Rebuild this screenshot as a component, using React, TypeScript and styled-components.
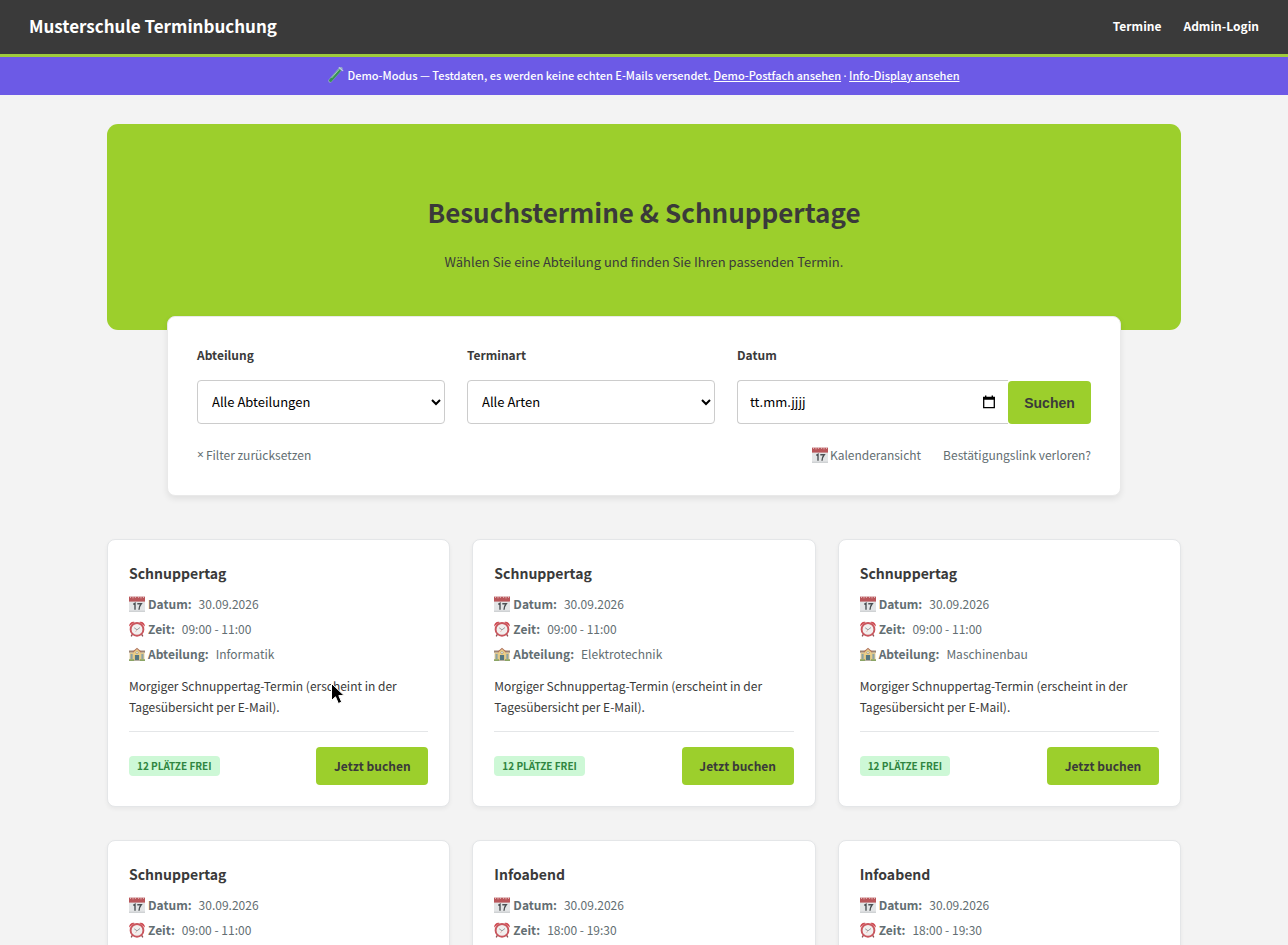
import React from "react";
import styled, { createGlobalStyle } from "styled-components";

const GlobalStyle = createGlobalStyle`
  *, *::before, *::after { box-sizing: border-box; }
  body {
    margin: 0;
    background: #f3f3f3;
    color: #3a3a3a;
    font-family: "Noto Sans CJK SC", "Noto Sans", sans-serif;
    font-size: 13px;
    line-height: 20px;
  }
`;

const Page = styled.div`
  position: relative;
`;

const Header = styled.header`
  display: flex;
  align-items: center;
  justify-content: space-between;
  height: 57px;
  padding: 0 29px 2px;
  background: #3a3a3a;
  border-bottom: 3px solid #9fcb3b;
`;

const Brand = styled.a`
  color: #fff;
  font-size: 17px;
  font-weight: 700;
  line-height: 28px;
  text-decoration: none;
`;

const Nav = styled.nav`
  display: flex;
  gap: 22px;
`;

const NavLink = styled.a`
  color: #fff;
  font-size: 12px;
  font-weight: 700;
  text-decoration: none;
`;

const Banner = styled.div`
  display: flex;
  align-items: center;
  justify-content: center;
  gap: 3px;
  height: 38px;
  padding-bottom: 2px;
  background: #6c5ae6;
  color: #fff;
  font-size: 11px;
  font-weight: 500;

  a { color: inherit; }
`;

const Symbol = styled.span`
  font-family: "Noto Sans", sans-serif;
`;

const Main = styled.main`
  max-width: 1074px;
  margin: 0 auto;
  padding: 29px 0;
`;

const Hero = styled.section`
  padding: 67px 22px 57px;
  background: #9ccf2c;
  border-radius: 11px;
  text-align: center;
`;

const HeroTitle = styled.h1`
  margin: 0 0 18px;
  font-size: 26px;
  font-weight: 700;
  line-height: 42px;
`;

const HeroText = styled.p`
  margin: 0;
  font-size: 13px;
  line-height: 22px;
`;

const FilterPanel = styled.form`
  position: relative;
  max-width: 954px;
  margin: -14px auto 43px;
  padding: 28px 29px 30px;
  background: #fff;
  border: 1px solid #e9e9e9;
  border-radius: 8px;
  box-shadow: 0 3px 6px rgba(0, 0, 0, 0.08);
`;

const FilterRow = styled.div`
  display: grid;
  grid-template-columns: 248fr 248fr 354fr;
  gap: 22px;
`;

const Field = styled.div`
  display: flex;
  flex-direction: column;
  gap: 15px;
`;

const Label = styled.label`
  font-size: 12px;
  font-weight: 700;
`;

const Select = styled.select`
  width: 100%;
  height: 44px;
  padding: 0 0 2px 10px;
  background: #fff;
  border: 1px solid #ccc;
  border-radius: 4px;
  color: #000;
  font: 400 13px "Noto Sans CJK SC", "Noto Sans", sans-serif;
`;

const DateRow = styled.div`
  display: flex;
  align-items: flex-end;
`;

const DateBox = styled.div`
  display: flex;
  flex: 1;
  align-items: center;
  height: 44px;
  padding: 0 12px 1px;
  background: #fff;
  border: 1px solid #ccc;
  border-right: 0;
  border-radius: 4px 0 0 4px;
`;

const DateInput = styled.input`
  flex: 1;
  min-width: 0;
  padding: 0;
  background: none;
  border: 0;
  color: #000;
  font: 400 13px "Noto Sans CJK SC", "Noto Sans", sans-serif;

  &::placeholder { color: #000; opacity: 1; }
`;

const PickerButton = styled.button`
  display: flex;
  padding: 0;
  background: none;
  border: 0;
`;

const SearchButton = styled.button`
  width: 83px;
  height: 43px;
  padding: 0;
  background: #9ccf2c;
  border: 0;
  border-radius: 4px;
  color: #3a3a3a;
  font: 700 14px "Liberation Sans", Arial, sans-serif;
`;

const FilterLinks = styled.div`
  display: flex;
  gap: 22px;
  margin-top: 21px;
`;

const QuietLink = styled.a<{ $push?: boolean }>`
  display: flex;
  align-items: center;
  gap: 2px;
  margin-left: ${(p) => (p.$push ? "auto" : "0")};
  color: #636e72;
  font-size: 12px;
  text-decoration: none;
`;

const CardGrid = styled.div`
  display: grid;
  grid-template-columns: repeat(3, 1fr);
  gap: 33px 22px;
`;

const Card = styled.article`
  padding: 21px;
  background: #fff;
  border: 1px solid #e4e6e8;
  border-radius: 8px;
  box-shadow: 0 2px 4px rgba(0, 0, 0, 0.05);
`;

const CardTitle = styled.h2`
  margin: 0 0 9px;
  font-size: 14px;
  font-weight: 700;
  line-height: 24px;
`;

const Meta = styled.p`
  display: flex;
  align-items: center;
  gap: 3px;
  margin: 0 0 5px;
  color: #636e72;
  font-size: 12px;
`;

const MetaLabel = styled.strong`
  margin-right: 4px;
  font-weight: 700;
`;

const Description = styled.p`
  margin: 11px 0 14px;
  font-size: 12px;
  line-height: 21px;
`;

const CardFooter = styled.div`
  display: flex;
  align-items: center;
  justify-content: space-between;
  padding-top: 15px;
  border-top: 1px solid #e4e6e8;
`;

const Badge = styled.span`
  padding: 0 8px;
  background: #cdf8d6;
  border-radius: 4px;
  color: #2f8540;
  font-size: 10px;
  font-weight: 700;
  text-transform: uppercase;
`;

const BookButton = styled.button`
  width: 112px;
  height: 38px;
  padding: 0 0 2px;
  background: #9ccf2c;
  border: 0;
  border-radius: 4px;
  color: #3a3a3a;
  font: 700 12px "Noto Sans CJK SC", "Noto Sans", sans-serif;
`;

const Pointer = styled.svg`
  position: absolute;
  top: 682px;
  left: 330px;
  pointer-events: none;
`;

const CalendarEmoji = () => (
  <svg width="16" height="16" viewBox="0 0 16 16" aria-hidden="true">
    <path d="M0 4h16v12H0z" fill="#e3e5e6" />
    <path d="M0 14.6h16V16H0z" fill="#cfd2d4" />
    <path d="M0 .6h16v5H0z" fill="#b9565a" />
    <path d="M1.5 0v2M4 0v2.4M6.4 0v2M9.6 0v2M12 0v2.4M14.5 0v2" stroke="#e8c9ca" strokeWidth=".8" />
    <path d="M4.3 8.300l1.700-1v6.400M8.300 7.700h3.900c-1.500 1.800-2.100 3.600-2.200 6" fill="none" stroke="#4c5154" strokeWidth="1.400" />
  </svg>
);

const ClockEmoji = () => (
  <svg width="16" height="16" viewBox="0 0 16 16" aria-hidden="true">
    <path d="M3.500 13l-1.300 2.400M12.500 13l1.300 2.400" stroke="#8e5052" strokeWidth="1.400" />
    <path d="M.2 5.600C-.2 2.200 2.500.2 5.600.9zM15.800 5.600C16.200 2.200 13.500.2 10.400.9z" fill="#cf4a52" />
    <circle cx="8" cy="8.400" r="6.400" fill="#f1efee" stroke="#c9565d" strokeWidth="1.900" />
    <path d="M5.200 6.800L8 8.800l3-2.300" fill="none" stroke="#7d888b" strokeWidth=".8" />
    <path d="M8 8.800l-1.600 2.200" stroke="#df9b92" strokeWidth=".6" />
  </svg>
);

const SchoolEmoji = () => (
  <svg width="16" height="16" viewBox="0 0 16 16" aria-hidden="true">
    <path d="M0 4.500h16v2.200H0z" fill="#9a8374" />
    <path d="M.6 6.600h14.800V14H.6z" fill="#e0c78c" />
    <path d="M1.600 8h2v5h-2zM12.400 8h2v5h-2z" fill="#8ba3a4" />
    <path d="M4.500 5.800L8 2.800l3.500 3V14h-7z" fill="#eccf86" />
    <path d="M3.800 6.200L8 2.400l4.200 3.800" fill="none" stroke="#b0735c" strokeWidth="1.100" />
    <circle cx="8" cy="6.700" r="1.100" fill="#fff" stroke="#6d6a5f" strokeWidth=".5" />
    <path d="M5.900 9h4.200v5H5.900z" fill="#557680" />
    <path d="M0 13.200h5V15H0zM11 13.200h5V15h-5z" fill="#8ba565" />
    <path d="M5 14h6v1H5z" fill="#b6afa3" />
  </svg>
);

const TubeEmoji = () => (
  <svg width="16" height="16" viewBox="0 0 16 16" aria-hidden="true">
    <path d="M12.800 1.600L2.200 13.800" stroke="#8fa3c8" strokeWidth="3.800" strokeLinecap="round" />
    <path d="M11.400 3.600L2.500 13.500" stroke="#379055" strokeWidth="2.900" strokeLinecap="round" />
    <path d="M11.300 2.300L3.500 11" stroke="#b4dcc0" strokeWidth=".8" />
    <path d="M11.200.6l3.600 3" stroke="#c3cfe3" strokeWidth="1.100" strokeLinecap="round" />
  </svg>
);

const PickerIcon = () => (
  <svg width="14" height="14" viewBox="0 0 14 14" aria-hidden="true">
    <path d="M1.700 2.500h10.600v10.200H1.700z" fill="none" stroke="#000" strokeWidth="1.300" />
    <path d="M1.100 1.900h11.800v2.900H1.100zM3 .5h1.400v2H3zM9.600.5H11v2H9.600z" />
  </svg>
);

type Event = { title: string; time: string; department: string };

const events: Event[] = [
  { title: "Schnuppertag", time: "09:00 - 11:00", department: "Informatik" },
  { title: "Schnuppertag", time: "09:00 - 11:00", department: "Elektrotechnik" },
  { title: "Schnuppertag", time: "09:00 - 11:00", department: "Maschinenbau" },
  { title: "Schnuppertag", time: "09:00 - 11:00", department: "Informatik" },
  { title: "Infoabend", time: "18:00 - 19:30", department: "Elektrotechnik" },
  { title: "Infoabend", time: "18:00 - 19:30", department: "Maschinenbau" },
];

const EventCard = ({ title, time, department }: Event) => (
  <Card>
    <CardTitle>{title}</CardTitle>
    <Meta><CalendarEmoji /><MetaLabel>Datum:</MetaLabel>30.09.2026</Meta>
    <Meta><ClockEmoji /><MetaLabel>Zeit:</MetaLabel>{time}</Meta>
    <Meta><SchoolEmoji /><MetaLabel>Abteilung:</MetaLabel>{department}</Meta>
    <Description>Morgiger Schnuppertag-Termin (erscheint in der Tagesübersicht per E-Mail).</Description>
    <CardFooter>
      <Badge>12 Plätze frei</Badge>
      <BookButton type="button">Jetzt buchen</BookButton>
    </CardFooter>
  </Card>
);

export default function App() {
  return (
    <Page>
      <GlobalStyle />
      <Header>
        <Brand href="#">Musterschule Terminbuchung</Brand>
        <Nav>
          <NavLink href="#termine">Termine</NavLink>
          <NavLink href="#login">Admin-Login</NavLink>
        </Nav>
      </Header>
      <Banner>
        <TubeEmoji />
        <span>
          Demo-Modus — Testdaten, es werden keine echten E-Mails versendet.{" "}
          <a href="#postfach">Demo-Postfach ansehen</a> <Symbol>·</Symbol>{" "}
          <a href="#display">Info-Display ansehen</a>
        </span>
      </Banner>
      <Main>
        <Hero>
          <HeroTitle>Besuchstermine &amp; Schnuppertage</HeroTitle>
          <HeroText>Wählen Sie eine Abteilung und finden Sie Ihren passenden Termin.</HeroText>
        </Hero>
        <FilterPanel onSubmit={(e) => e.preventDefault()}>
          <FilterRow>
            <Field>
              <Label htmlFor="abteilung">Abteilung</Label>
              <Select id="abteilung">
                <option>Alle Abteilungen</option>
                <option>Informatik</option>
                <option>Elektrotechnik</option>
                <option>Maschinenbau</option>
              </Select>
            </Field>
            <Field>
              <Label htmlFor="terminart">Terminart</Label>
              <Select id="terminart">
                <option>Alle Arten</option>
                <option>Schnuppertag</option>
                <option>Infoabend</option>
              </Select>
            </Field>
            <Field>
              <Label htmlFor="datum">Datum</Label>
              <DateRow>
                <DateBox>
                  <DateInput id="datum" type="text" placeholder="tt.mm.jjjj" />
                  <PickerButton type="button" aria-label="Kalender öffnen"><PickerIcon /></PickerButton>
                </DateBox>
                <SearchButton type="submit">Suchen</SearchButton>
              </DateRow>
            </Field>
          </FilterRow>
          <FilterLinks>
            <QuietLink href="#reset"><Symbol>×</Symbol>Filter zurücksetzen</QuietLink>
            <QuietLink href="#kalender" $push><CalendarEmoji />Kalenderansicht</QuietLink>
            <QuietLink href="#link">Bestätigungslink verloren?</QuietLink>
          </FilterLinks>
        </FilterPanel>
        <CardGrid>
          {events.map((event, i) => <EventCard key={i} {...event} />)}
        </CardGrid>
      </Main>
      <Pointer width="16" height="24" viewBox="0 0 16 24" aria-hidden="true">
        <path d="M1.500 1.500v17l4-3.700 2.900 6.700 3.300-1.400-2.900-6.500h5.400z" fill="#000" stroke="#fff" strokeWidth="1" />
      </Pointer>
    </Page>
  );
}
